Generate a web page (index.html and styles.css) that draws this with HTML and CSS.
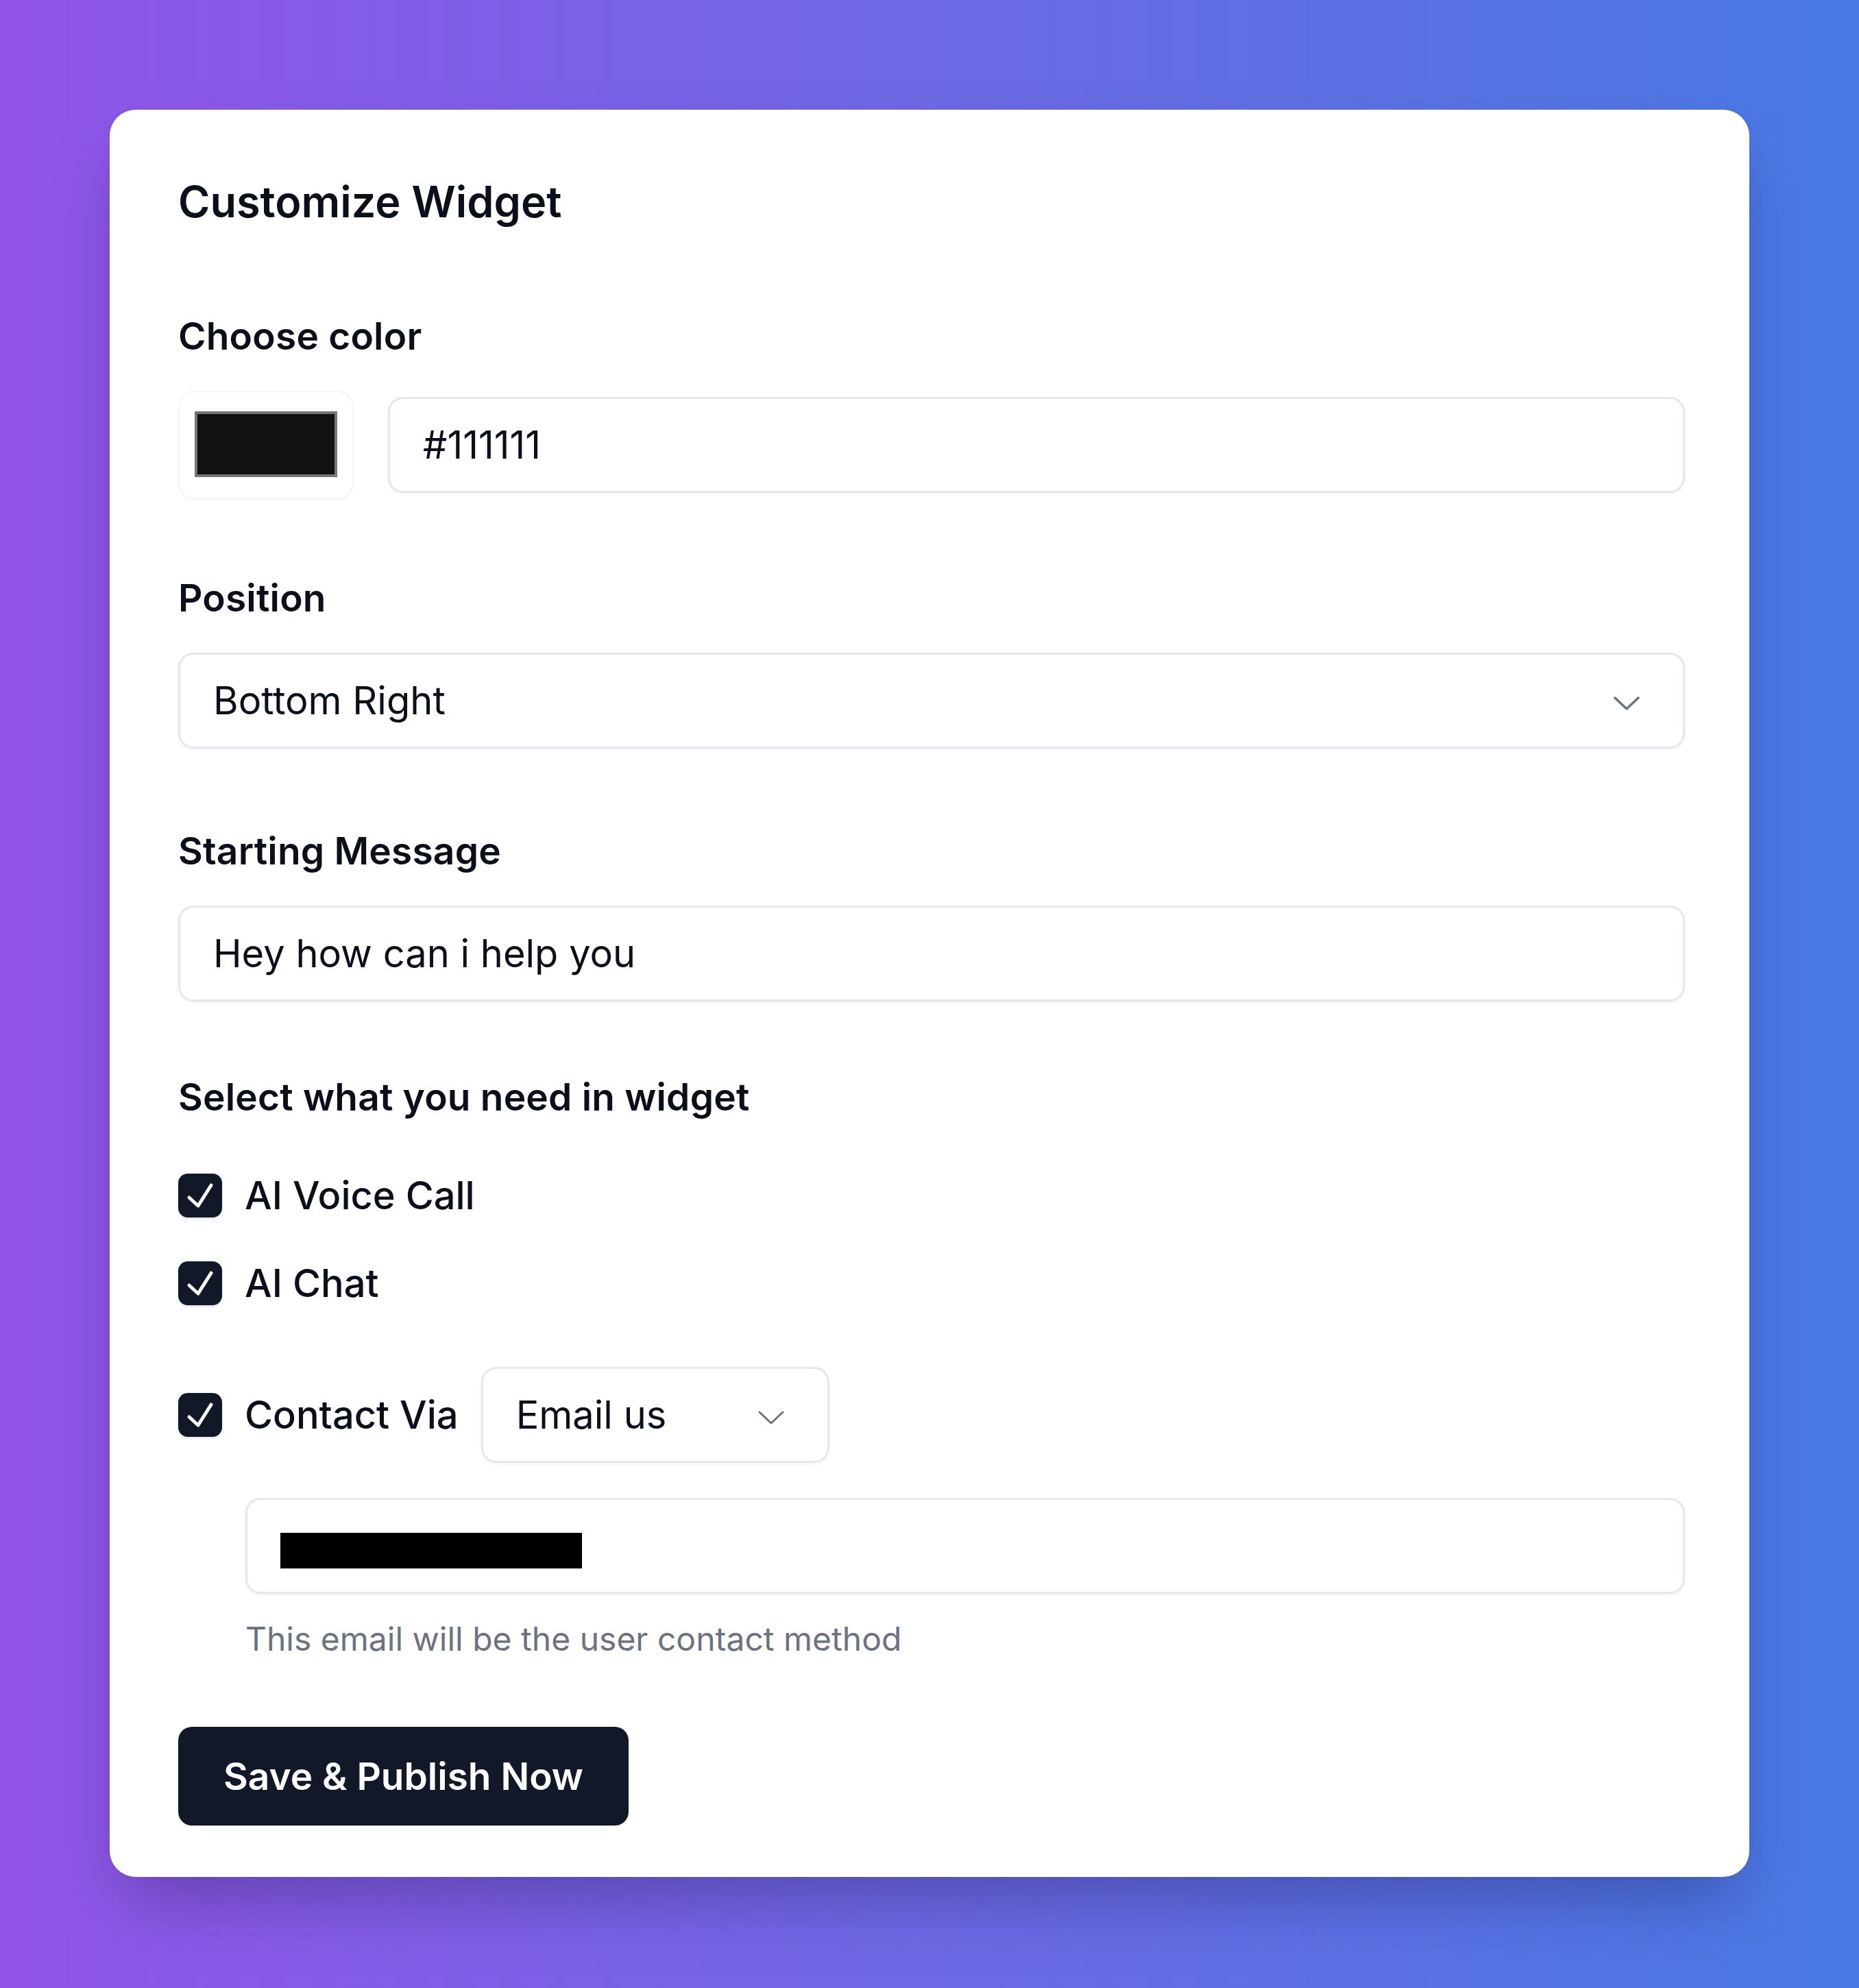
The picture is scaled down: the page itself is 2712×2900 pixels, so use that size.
FILE: index.html
```html
<!DOCTYPE html>
<html lang="en">
<head>
<meta charset="utf-8">
<title>Customize Widget</title>
<link rel="stylesheet" href="styles.css">
</head>
<body>
<main class="card">
  <h1 class="title">Customize Widget</h1>

  <section class="field">
    <div class="label">Choose color</div>
    <div class="color-row">
      <div class="swatch-box"><div class="swatch"></div></div>
      <div class="input">#111111</div>
    </div>
  </section>

  <section class="field">
    <div class="label">Position</div>
    <div class="input select">
      <span>Bottom Right</span>
      <svg class="chevron" viewBox="0 0 40 22" width="40" height="22"><path d="M3 3 L20 19 L37 3" fill="none" stroke="#6b7280" stroke-width="3.5" stroke-linecap="round" stroke-linejoin="round"/></svg>
    </div>
  </section>

  <section class="field field-message">
    <div class="label">Starting Message</div>
    <div class="input">Hey how can i help you</div>
  </section>

  <section class="field field-options">
    <div class="label">Select what you need in widget</div>
    <div class="options">
      <div class="option">
        <span class="check"><svg viewBox="0 0 64 64" width="64" height="64"><path d="M16 35 L29 47 L48 17" fill="none" stroke="#fff" stroke-width="5" stroke-linecap="round" stroke-linejoin="round"/></svg></span>
        <span class="option-text">AI Voice Call</span>
      </div>
      <div class="option">
        <span class="check"><svg viewBox="0 0 64 64" width="64" height="64"><path d="M16 35 L29 47 L48 17" fill="none" stroke="#fff" stroke-width="5" stroke-linecap="round" stroke-linejoin="round"/></svg></span>
        <span class="option-text">AI Chat</span>
      </div>
      <div class="option option-contact">
        <span class="check"><svg viewBox="0 0 64 64" width="64" height="64"><path d="M16 35 L29 47 L48 17" fill="none" stroke="#fff" stroke-width="5" stroke-linecap="round" stroke-linejoin="round"/></svg></span>
        <span class="option-text">Contact Via</span>
        <div class="input select select-small">
          <span>Email us</span>
          <svg class="chevron" viewBox="0 0 40 22" width="40" height="22"><path d="M3 3 L20 19 L37 3" fill="none" stroke="#6b7280" stroke-width="3" stroke-linecap="round" stroke-linejoin="round"/></svg>
        </div>
      </div>
    </div>
    <div class="contact-detail">
      <div class="input"><span class="redacted"></span></div>
      <p class="helper">This email will be the user contact method</p>
    </div>
  </section>

  <button class="publish">Save &amp; Publish Now</button>
</main>
</body>
</html>
```

FILE: styles.css
```css
html, body {
  margin: 0;
  padding: 0;
}

body {
  min-height: 2900px;
  box-sizing: border-box;
  padding: 160px;
  background: linear-gradient(to right, #9155e8 0%, #6e69e6 50%, #4879e4 100%);
  font-family: "Inter", "Noto Sans", "Liberation Sans", sans-serif;
  color: #0b0f1a;
}

.card {
  background: #ffffff;
  border-radius: 38px;
  padding: 94px 94px 75px 100px;
  display: flex;
  flex-direction: column;
  align-items: stretch;
  box-shadow: 0 50px 100px -24px rgba(20, 20, 60, 0.35), 0 0 6px rgba(0, 0, 0, 0.04);
}

.title {
  margin: 0 0 120px;
  font-size: 63px;
  line-height: 80px;
  font-weight: 600;
}

.field {
  display: flex;
  flex-direction: column;
  gap: 44px;
}

.field + .field {
  margin-top: 108px;
}

.field.field-message {
  margin-top: 113px;
}

.field.field-options {
  margin-top: 103px;
}

.label {
  font-size: 55px;
  line-height: 72px;
  font-weight: 600;
  letter-spacing: 0.2px;
}

.input {
  box-sizing: border-box;
  height: 140px;
  border: 3px solid #e5e7eb;
  border-radius: 22px;
  background: #ffffff;
  box-shadow: 0 2px 4px rgba(0, 0, 0, 0.05);
  padding: 0 48px;
  display: flex;
  align-items: center;
  font-size: 56px;
  font-weight: 400;
}

.color-row {
  display: flex;
  align-items: center;
  gap: 50px;
}

.color-row .input {
  flex: 1;
}

.swatch-box {
  box-sizing: border-box;
  width: 256px;
  height: 158px;
  border-radius: 24px;
  border: 2px solid #f5f6f8;
  box-shadow: 0 2px 5px rgba(0, 0, 0, 0.035);
  padding: 28px 22px 30px;
}

.swatch {
  box-sizing: border-box;
  width: 100%;
  height: 100%;
  background: #111111;
  border: 4px solid #767676;
}

.select {
  justify-content: space-between;
  padding-right: 62px;
}

.chevron {
  display: block;
  flex: none;
  margin-top: 8px;
}

.options {
  margin-top: 28px;
  display: flex;
  flex-direction: column;
  gap: 56px;
}

.option {
  display: flex;
  align-items: center;
  gap: 33px;
  min-height: 72px;
}

.option-contact {
  margin-top: 30px;
}

.check {
  width: 64px;
  height: 64px;
  flex: none;
  border-radius: 14px;
  background: #111827;
  box-shadow: 0 2px 4px rgba(0, 0, 0, 0.12);
  display: block;
}

.check svg {
  display: block;
}

.option-text {
  font-size: 56px;
  line-height: 72px;
  font-weight: 500;
}

.select-small {
  width: 508px;
}

.contact-detail {
  margin-top: 7px;
  padding-left: 98px;
}

.redacted {
  display: inline-block;
  width: 440px;
  height: 52px;
  background: #000000;
  margin-top: 14px;
}

.helper {
  margin: 36px 0 0;
  font-size: 48px;
  line-height: 60px;
  color: #6b7280;
}

.publish {
  align-self: flex-start;
  margin-top: 98px;
  height: 144px;
  padding: 0 66px;
  border: none;
  border-radius: 20px;
  background: #111827;
  color: #ffffff;
  font-family: "Inter", "Noto Sans", "Liberation Sans", sans-serif;
  font-size: 55px;
  font-weight: 600;
}
```
